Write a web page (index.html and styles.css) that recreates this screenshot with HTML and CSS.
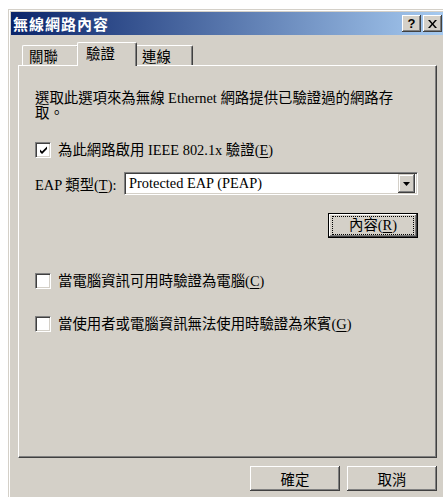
FILE: index.html
```html
<!DOCTYPE html>
<html lang="zh-Hant">
<head>
<meta charset="utf-8">
<title>無線網路內容</title>
<link rel="stylesheet" href="styles.css">
</head>
<body>
<div class="window">
  <div class="caption">
    <span class="caption-title">無線網路內容</span>
    <div class="caption-buttons">
      <span class="cap-btn help">?</span>
      <span class="cap-btn close">
        <svg width="9" height="8" viewBox="0 0 9 8"><path d="M0 0h2l2.5 3 2.5-3h2L5.5 4 9 8H7L4.5 5 2 8H0l3.5-4z" fill="#000"/></svg>
      </span>
    </div>
  </div>
  <div class="client">
    <div class="tabs">
      <div class="tab tab-first">關聯</div>
      <div class="tab active">驗證</div>
      <div class="tab tab-last">連線</div>
    </div>
    <div class="panel">
      <p class="intro">選取此選項來為無線 Ethernet 網路提供已驗證過的網路存<br>取。</p>

      <label class="check-row row-enable">
        <span class="checkbox">
          <svg width="9" height="9" viewBox="0 0 9 9"><path d="M1 3.5l2 2 5-5v2.5L3 8 1 6z" fill="#000"/></svg>
        </span>
        <span>為此網路啟用 IEEE 802.1x 驗證(<u>E</u>)</span>
      </label>

      <div class="eap-row">
        <span class="eap-label">EAP 類型(<u>T</u>):</span>
        <div class="combo">
          <span class="combo-value">Protected EAP (PEAP)</span>
          <span class="combo-drop">
            <svg width="7" height="4" viewBox="0 0 7 4"><path d="M0 0h7L3.5 4z" fill="#000"/></svg>
          </span>
        </div>
      </div>

      <div class="props-row">
        <button class="btn btn-focus" type="button"><span class="focus-ring">內容(<u>R</u>)</span></button>
      </div>

      <label class="check-row row-machine">
        <span class="checkbox"></span>
        <span>當電腦資訊可用時驗證為電腦(<u>C</u>)</span>
      </label>

      <label class="check-row row-guest">
        <span class="checkbox"></span>
        <span>當使用者或電腦資訊無法使用時驗證為來賓(<u>G</u>)</span>
      </label>
    </div>

    <div class="dialog-buttons">
      <button class="btn" type="button">確定</button>
      <button class="btn" type="button">取消</button>
    </div>
  </div>
</div>
</body>
</html>
```

FILE: styles.css
```css
* {
  box-sizing: border-box;
}

html,
body {
  margin: 0;
  padding: 0;
}

body {
  width: 443px;
  height: 497px;
  overflow: hidden;
  background: #fff;
  font-family: "Liberation Serif", "Noto Sans CJK TC", serif;
  font-size: 14.4px;
  color: #000;
}

u {
  text-decoration-thickness: 1px;
  text-underline-offset: 2px;
}

/* window frame */
.window {
  margin: 9px 0 0 8px;
  width: 439px;
  height: 500px;
  background: #d4d0c8;
  border: 1px solid #d4d0c8;
  box-shadow: inset 1px 1px 0 #fff;
  padding: 2px;
}

/* title bar */
.caption {
  height: 23px;
  display: flex;
  align-items: center;
  justify-content: space-between;
  padding: 0 2px;
  background: linear-gradient(90deg, #0a246a 0%, #a6caf0 100%);
}

.caption-title {
  color: #fff;
  font-family: "Noto Sans CJK TC", sans-serif;
  font-weight: 700;
  font-size: 15px;
  line-height: 23px;
  letter-spacing: 1px;
}

.caption-buttons {
  display: flex;
  gap: 2px;
}

.cap-btn {
  width: 19px;
  height: 17px;
  display: flex;
  align-items: center;
  justify-content: center;
  background: #d4d0c8;
  box-shadow: inset -1px -1px 0 #404040, inset 1px 1px 0 #fff,
    inset -2px -2px 0 #808080, inset 2px 2px 0 #d4d0c8;
}

.cap-btn.help {
  font-family: "Liberation Sans", sans-serif;
  font-weight: 700;
  font-size: 13px;
  line-height: 1;
  padding-bottom: 1px;
}

/* client area */
.client {
  padding: 7px 7px 0 7px;
}

.tabs {
  height: 23px;
  display: flex;
  align-items: flex-end;
  padding-left: 4px;
}

.tab {
  height: 20px;
  width: 57px;
  padding-left: 6px;
  line-height: 19px;
  background: #d4d0c8;
  border-top: 1px solid #fff;
  border-left: 1px solid #fff;
  border-right: 1px solid #404040;
  border-radius: 2px 2px 0 0;
  box-shadow: inset -1px 0 0 #808080;
  font-family: "Noto Sans CJK TC", sans-serif;
}

.tab-last {
  width: 58px;
}

.tab.active {
  position: relative;
  z-index: 1;
  width: 60px;
  height: 24px;
  margin: 0 -2px -1px -2px;
  padding-left: 8px;
  line-height: 20px;
}

.panel {
  height: 393px;
  border-top: 1px solid #fff;
  border-left: 1px solid #fff;
  border-right: 1px solid #404040;
  border-bottom: 1px solid #404040;
  box-shadow: inset -1px -1px 0 #808080;
  padding: 25px 18px 0 16px;
  display: flex;
  flex-direction: column;
}

.intro {
  margin: 0;
  line-height: 15px;
}

/* check boxes */
.check-row {
  display: flex;
  align-items: center;
  gap: 7px;
  height: 16px;
  line-height: 16px;
}

.row-enable {
  margin-top: 21px;
}

.row-machine {
  margin-top: 35px;
}

.row-guest {
  margin-top: 27px;
}

.checkbox {
  width: 16px;
  height: 16px;
  flex-shrink: 0;
  display: flex;
  align-items: center;
  justify-content: center;
  background: #fff;
  border: 1px solid;
  border-color: #808080 #fff #fff #808080;
  box-shadow: inset 1px 1px 0 #404040, inset -1px -1px 0 #d4d0c8;
}

/* EAP type selector */
.eap-row {
  margin-top: 14px;
  display: flex;
  align-items: center;
}

.eap-label {
  width: 89px;
  flex-shrink: 0;
}

.combo {
  flex: 1;
  height: 23px;
  display: flex;
  align-items: center;
  justify-content: space-between;
  background: #fff;
  border: 1px solid;
  border-color: #808080 #fff #fff #808080;
  box-shadow: inset 1px 1px 0 #404040, inset -1px -1px 0 #d4d0c8;
  padding: 2px;
}

.combo-value {
  padding-left: 2px;
  line-height: 19px;
}

.combo-drop {
  width: 17px;
  height: 19px;
  display: flex;
  align-items: center;
  justify-content: center;
  background: #d4d0c8;
  box-shadow: inset -1px -1px 0 #404040, inset 1px 1px 0 #d4d0c8,
    inset -2px -2px 0 #808080, inset 2px 2px 0 #fff;
}

/* push buttons */
.props-row {
  margin-top: 18px;
  display: flex;
  justify-content: flex-end;
}

.btn {
  width: 90px;
  height: 25px;
  padding: 0;
  margin: 0;
  border: 0;
  background: #d4d0c8;
  font: inherit;
  color: #000;
  display: flex;
  align-items: center;
  justify-content: center;
  box-shadow: inset -1px -1px 0 #404040, inset 1px 1px 0 #fff,
    inset -2px -2px 0 #808080, inset 2px 2px 0 #d4d0c8;
}

.btn-focus {
  border: 1px solid #000;
  box-shadow: inset -1px -1px 0 #404040, inset 1px 1px 0 #fff,
    inset -2px -2px 0 #808080;
}

.focus-ring {
  width: 80px;
  height: 17px;
  line-height: 16px;
  outline: 1px dotted #000;
  display: block;
  text-align: center;
}

.dialog-buttons {
  margin-top: 8px;
  display: flex;
  justify-content: flex-end;
  gap: 7px;
}
```
